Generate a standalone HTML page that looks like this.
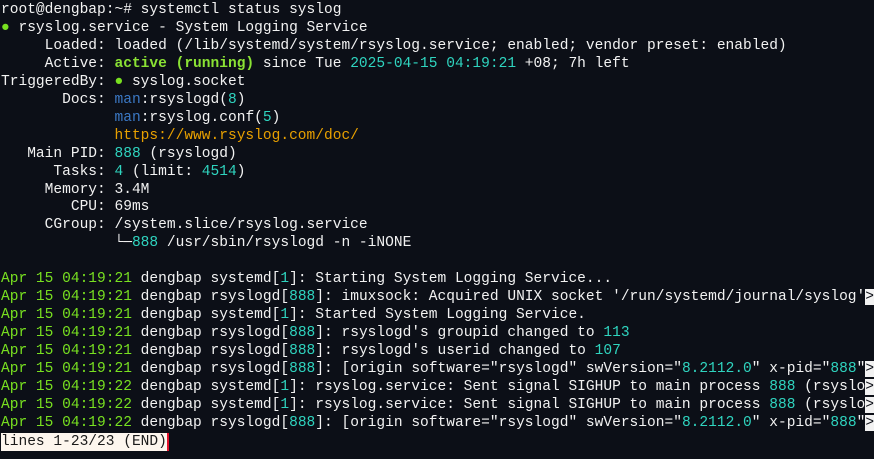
<!DOCTYPE html>
<html><head><meta charset="utf-8"><style>
html,body{margin:0;padding:0;background:#0c0f17;width:874px;height:459px;overflow:hidden}
.t{margin:0;padding:2px 0 0 1px;font-family:"Liberation Mono","DejaVu Sans Mono",monospace;font-size:14.55px;color:#f2f2f2}
.t div{height:17.96px;line-height:17.96px;overflow:visible;white-space:pre}
.g{color:#78e020}.gb{color:#8ae234;font-weight:bold}.c{color:#2fd4bf}.b{color:#3b78c4}.o{color:#e8a000}
.st{background:#fdf6ee;color:#1a1a1a;display:inline-block;height:18px;line-height:18px}.cur{display:inline-block;width:2px;height:18px;background:#e0102a;vertical-align:top}
.k{background:#f2f2f2;color:#0c0f17}
</style></head><body><div class="t">
<div>root@dengbap:~# systemctl status syslog</div>
<div><span class="g">●</span> rsyslog.service - System Logging Service</div>
<div>     Loaded: loaded (/lib/systemd/system/rsyslog.service; enabled; vendor preset: enabled)</div>
<div>     Active: <span class="gb">active (running)</span> since Tue <span class="c">2025-04-15 04:19:21</span> +08; 7h left</div>
<div>TriggeredBy: <span class="g">●</span> syslog.socket</div>
<div>       Docs: <span class="b">man</span>:rsyslogd(<span class="c">8</span>)</div>
<div>             <span class="b">man</span>:rsyslog.conf(<span class="c">5</span>)</div>
<div>             <span class="o">https://www.rsyslog.com/doc/</span></div>
<div>   Main PID: <span class="c">888</span> (rsyslogd)</div>
<div>      Tasks: <span class="c">4</span> (limit: <span class="c">4514</span>)</div>
<div>     Memory: 3.4M</div>
<div>        CPU: 69ms</div>
<div>     CGroup: /system.slice/rsyslog.service</div>
<div>             └─<span class="c">888</span> /usr/sbin/rsyslogd -n -iNONE</div>
<div> </div>
<div><span class="g">Apr 15 04:19:21</span> dengbap systemd[<span class="c">1</span>]: Starting System Logging Service...</div>
<div><span class="g">Apr 15 04:19:21</span> dengbap rsyslogd[<span class="c">888</span>]: imuxsock: Acquired UNIX socket '/run/systemd/journal/syslog'<span class="k">&gt;</span></div>
<div><span class="g">Apr 15 04:19:21</span> dengbap systemd[<span class="c">1</span>]: Started System Logging Service.</div>
<div><span class="g">Apr 15 04:19:21</span> dengbap rsyslogd[<span class="c">888</span>]: rsyslogd's groupid changed to <span class="c">113</span></div>
<div><span class="g">Apr 15 04:19:21</span> dengbap rsyslogd[<span class="c">888</span>]: rsyslogd's userid changed to <span class="c">107</span></div>
<div><span class="g">Apr 15 04:19:21</span> dengbap rsyslogd[<span class="c">888</span>]: [origin software="rsyslogd" swVersion="<span class="c">8.2112.0</span>" x-pid="<span class="c">888</span>"<span class="k">&gt;</span></div>
<div><span class="g">Apr 15 04:19:22</span> dengbap systemd[<span class="c">1</span>]: rsyslog.service: Sent signal SIGHUP to main process <span class="c">888</span> (rsyslo<span class="k">&gt;</span></div>
<div><span class="g">Apr 15 04:19:22</span> dengbap systemd[<span class="c">1</span>]: rsyslog.service: Sent signal SIGHUP to main process <span class="c">888</span> (rsyslo<span class="k">&gt;</span></div>
<div><span class="g">Apr 15 04:19:22</span> dengbap rsyslogd[<span class="c">888</span>]: [origin software="rsyslogd" swVersion="<span class="c">8.2112.0</span>" x-pid="<span class="c">888</span>"<span class="k">&gt;</span></div>
<div><span class="st">lines 1-23/23 (END)</span><span class="cur"></span></div>
</div></body></html>
